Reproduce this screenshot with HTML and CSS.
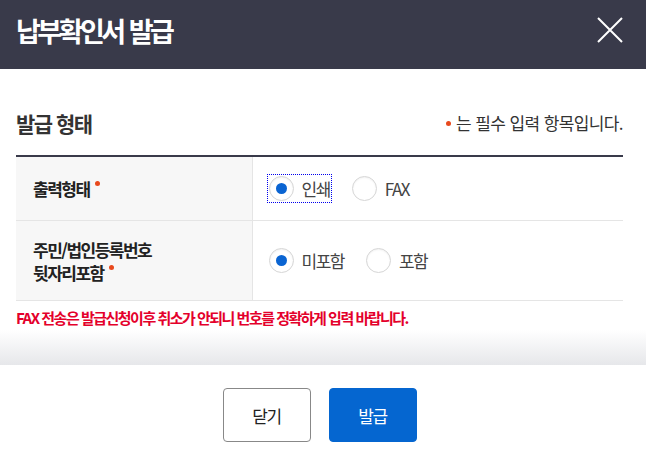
FILE: index.html
```html
<!DOCTYPE html>
<html lang="ko">
<head>
    <meta charset="UTF-8">
    <meta name="viewport" content="width=device-width, initial-scale=1.0">
    <title>납부확인서 발급</title>
    <link rel="stylesheet" href="styles.css">
</head>
<body>
    <div class="modal">
        <header class="modal-header">
            <h1>납부확인서 발급</h1>
            <button type="button" class="btn-close" aria-label="닫기">
                <svg width="26" height="26" viewBox="0 0 26 26">
                    <path d="M1 1 L25 25 M25 1 L1 25" stroke="#fff" stroke-width="2" fill="none"/>
                </svg>
            </button>
        </header>

        <div class="modal-body">
            <div class="section-head">
                <h2>발급 형태</h2>
                <p class="note"><span class="dot"></span>는 필수 입력 항목입니다.</p>
            </div>

            <table class="form-table">
                <tbody>
                    <tr class="row-1">
                        <th>출력형태 <span class="req"></span></th>
                        <td>
                            <div class="radios">
                                <label class="radio focused"><input type="radio" name="output" checked><span>인쇄</span></label>
                                <label class="radio"><input type="radio" name="output"><span>FAX</span></label>
                            </div>
                        </td>
                    </tr>
                    <tr class="row-2">
                        <th>주민/법인등록번호<br>뒷자리포함 <span class="req"></span></th>
                        <td>
                            <div class="radios">
                                <label class="radio"><input type="radio" name="rrn" checked><span>미포함</span></label>
                                <label class="radio"><input type="radio" name="rrn"><span>포함</span></label>
                            </div>
                        </td>
                    </tr>
                </tbody>
            </table>

            <p class="warning">FAX 전송은 발급신청이후 취소가 안되니 번호를 정확하게 입력 바랍니다.</p>
        </div>

        <div class="fade"></div>

        <footer class="modal-footer">
            <button type="button" class="btn btn-line">닫기</button>
            <button type="button" class="btn btn-primary">발급</button>
        </footer>
    </div>
</body>
</html>
```

FILE: styles.css
```css
body {
    margin: 0;
    padding: 0;
    background-color: #fff;
    font-family: "Noto Sans CJK KR", "Noto Sans", sans-serif;
    color: #222;
    letter-spacing: -1px;
}

.modal {
    width: 646px;
    height: 451px;
    overflow: hidden;
}

.modal-header {
    display: flex;
    align-items: center;
    justify-content: space-between;
    height: 69px;
    padding: 0 23px 9px 16px;
    box-sizing: border-box;
    background-color: #393a4a;
}

.modal-header h1 {
    margin: 0;
    font-size: 27px;
    font-weight: 700;
    color: #fff;
    letter-spacing: -3.5px;
    word-spacing: 2px;
}

.btn-close {
    display: flex;
    padding: 0;
    border: none;
    background: none;
    cursor: pointer;
}

.modal-body {
    padding: 0 23px 0 16px;
}

.section-head {
    display: flex;
    align-items: center;
    justify-content: space-between;
    padding: 43px 0 21px;
}

.section-head h2 {
    margin: 0;
    font-size: 21px;
    font-weight: 700;
    color: #333;
    line-height: 22px;
    letter-spacing: -1.5px;
}

.note {
    display: flex;
    align-items: center;
    margin: 0;
    font-size: 17px;
    line-height: 22px;
    color: #333;
    letter-spacing: -0.6px;
}

.dot {
    width: 5px;
    height: 5px;
    margin-right: 5px;
    border-radius: 50%;
    background-color: #e8491d;
}

.form-table {
    width: 100%;
    border-collapse: collapse;
    border-top: 2px solid #393a4a;
}

.form-table th,
.form-table td {
    border-bottom: 1px solid #e5e5e5;
    text-align: left;
    vertical-align: middle;
}

.form-table th {
    width: 236px;
    padding: 0 0 0 17px;
    box-sizing: border-box;
    background-color: #f7f7f7;
    border-right: 1px solid #e5e5e5;
    font-size: 17px;
    font-weight: 700;
    line-height: 23px;
    letter-spacing: -1.5px;
    color: #222;
}

.row-1 th, .row-1 td {
    height: 63px;
}

.row-2 th, .row-2 td {
    height: 79px;
}

.form-table td {
    padding: 0 0 0 16px;
}

.req {
    display: inline-block;
    width: 5px;
    height: 5px;
    border-radius: 50%;
    background-color: #e8491d;
    vertical-align: 10px;
    margin-left: 2px;
}

.radios {
    display: flex;
    gap: 22px;
}

.radio {
    display: flex;
    align-items: center;
    gap: 8px;
    font-size: 17px;
    letter-spacing: -1.5px;
    color: #444;
    cursor: pointer;
}

.radio.focused {
    outline: 1px dotted #0000ee;
    outline-offset: 1px;
}

.radio input {
    appearance: none;
    -webkit-appearance: none;
    width: 25px;
    height: 25px;
    margin: 0;
    border: 1px solid #d6d6d6;
    border-radius: 50%;
    background-color: #fff;
    box-shadow: inset 0 1px 2px rgba(0, 0, 0, 0.06);
    display: grid;
    place-content: center;
}

.radio input:checked::before {
    content: "";
    width: 11px;
    height: 11px;
    border-radius: 50%;
    background-color: #0a64d2;
}

.warning {
    margin: 0;
    padding-top: 6px;
    font-size: 15px;
    font-weight: 700;
    color: #e4002b;
    line-height: 22px;
    letter-spacing: -1.5px;
}

.fade {
    height: 35px;
    margin-top: 1px;
    background: linear-gradient(to bottom, #fff, #e6e7ea);
}

.modal-footer {
    display: flex;
    justify-content: center;
    gap: 18px;
    padding: 23px 7px 0 0;
}

.btn {
    width: 88px;
    height: 54px;
    font-family: inherit;
    font-size: 17px;
    letter-spacing: -1.5px;
    border-radius: 4px;
    cursor: pointer;
}

.btn-line {
    background-color: #fff;
    border: 1px solid #888;
    color: #222;
}

.btn-primary {
    background-color: #0566d0;
    border: 1px solid #0566d0;
    color: #fff;
}
```
